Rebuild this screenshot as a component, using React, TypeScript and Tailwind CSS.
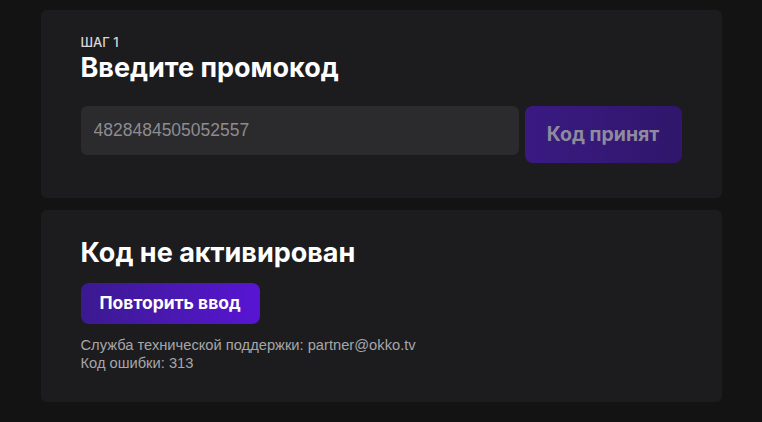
export default function App() {
  return (
    <div
      className="min-h-[422px] w-full bg-[#131313] pt-[10px] text-white"
      style={{ fontFamily: "Inter, 'Noto Sans', sans-serif" }}
    >
      <div className="mx-auto flex w-[681px] flex-col gap-3">
        {/* step 1: promo code */}
        <section className="rounded-md bg-[#1c1c1e] px-10 pt-6 pb-[35px]">
          <div className="text-[13px] leading-4 font-medium uppercase text-[#d8d8dc]">
            Шаг 1
          </div>
          <h1 className="mt-[2px] text-[27px] leading-8 font-bold">
            Введите промокод
          </h1>
          <div className="mt-[22px] flex items-start gap-[6px]">
            <input
              readOnly
              value="4828484505052557"
              className="h-[49px] flex-1 rounded-md bg-[#2b2a2d] px-[13px] font-['Liberation_Sans',Arial,sans-serif] text-[17.5px] text-[#8d8c90] outline-none"
            />
            <button className="h-[57px] w-[157px] rounded-lg bg-gradient-to-r from-[#3a1a82] to-[#30166c] text-[19.5px] font-bold text-[#8f8b9e]">
              Код принят
            </button>
          </div>
        </section>

        {/* result */}
        <section className="rounded-md bg-[#1c1c1e] px-10 pt-[27px] pb-[30px]">
          <h2 className="text-[27px] leading-8 font-bold">
            Код не активирован
          </h2>
          <button className="mt-[14px] h-[41px] rounded-lg bg-gradient-to-r from-[#3b1990] to-[#5814d4] px-[19px] text-[17.5px] font-bold">
            Повторить ввод
          </button>
          <div className="mt-3 font-['Liberation_Sans',Arial,sans-serif] text-[14.7px] leading-[18px] text-[#a6a6aa]">
            <p>Служба технической поддержки: partner@okko.tv</p>
            <p>Код ошибки: 313</p>
          </div>
        </section>
      </div>
    </div>
  );
}
